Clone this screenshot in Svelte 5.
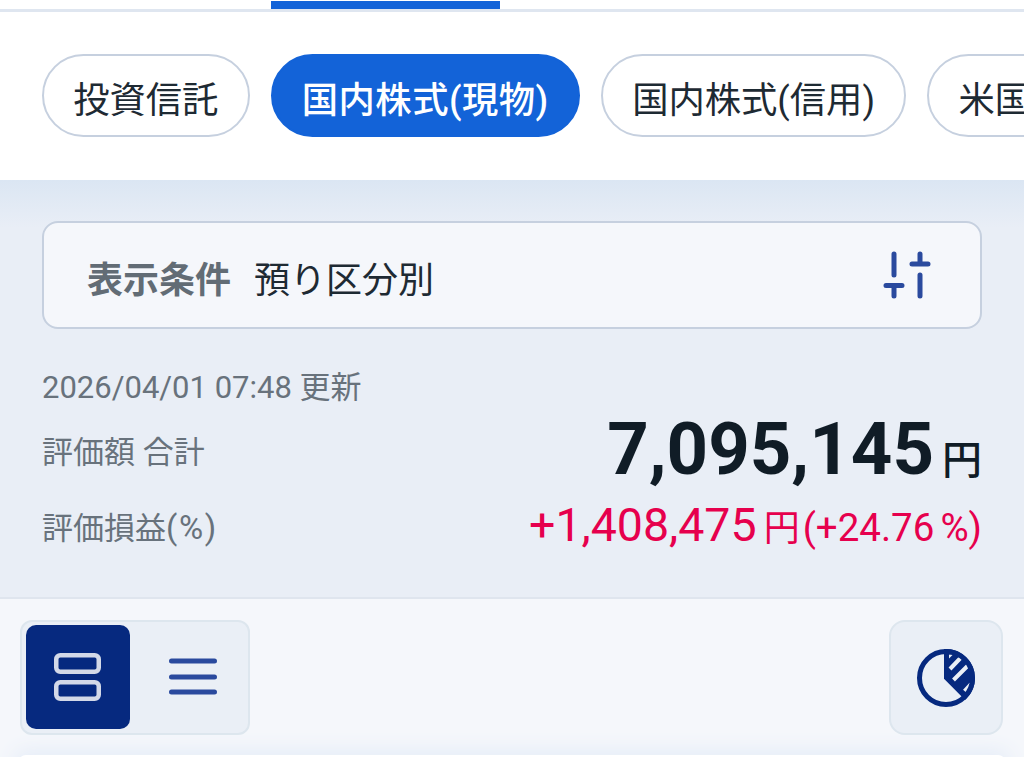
<script>
  const chips = ['投資信託', '国内株式(現物)', '国内株式(信用)', '米国株式']
  const active = '国内株式(現物)'
</script>

<div class="page">
  <div class="tabs">
    <div class="tabs__bar"></div>
  </div>

  <div class="chips">
    {#each chips as chip}
      <div class="chip" class:chip--active={chip === active}>{chip}</div>
    {/each}
  </div>

  <section class="summary">
    <div class="filter">
      <span class="filter__label">表示条件</span>
      <span class="filter__value">預り区分別</span>
      <svg class="filter__icon" width="50" height="50" viewBox="0 0 50 50" fill="none" stroke="#2a4a9e" stroke-width="5" stroke-linecap="round">
        <path d="M12 4V25M4 35.5H20M12 35.5V46M38 4V14M30 14H46M38 25V46" />
      </svg>
    </div>

    <div class="updated">2026/04/01 07:48 更新</div>

    <div class="row row--total">
      <span class="row__label">評価額 合計</span>
      <span class="total">7,095,145<span class="total__yen">円</span></span>
    </div>

    <div class="row row--gain">
      <span class="row__label">評価損益<span class="row__unit">(%)</span></span>
      <span class="gain">+1,408,475<span class="gain__yen">円</span><span class="gain__pct">(+24.76<span class="gain__mark">%</span>)</span></span>
    </div>
  </section>

  <section class="tools">
    <div class="toggle">
      <div class="toggle__btn toggle__btn--on">
        <svg width="48" height="48" viewBox="0 0 48 48" fill="none" stroke="#d3d9e8" stroke-width="4.5">
          <rect x="2.25" y="2.25" width="42.5" height="16.5" rx="4" />
          <rect x="2.25" y="29.25" width="42.5" height="16.5" rx="4" />
        </svg>
      </div>
      <div class="toggle__btn toggle__btn--list">
        <svg width="48" height="38" viewBox="0 0 48 38" fill="none" stroke="#2a4a9e" stroke-width="5" stroke-linecap="round">
          <path d="M2.5 3H45.5M2.5 19H45.5M2.5 34H45.5" />
        </svg>
      </div>
    </div>

    <div class="chart-btn">
      <svg width="60" height="60" viewBox="0 0 60 60" fill="none">
        <path d="M30 3A27 27 0 0 1 49.1 49.1L30 30Z" fill="#06297f" stroke="#06297f" stroke-width="4" />
        <g stroke="#eaeff6" stroke-width="4">
          <path d="M34 21L45 9.5M37.5 32L53 16.5M48.5 43L55 36" />
        </g>
        <path d="M33 6.5H37L33 10.5Z" fill="#eaeff6" />
        <circle cx="30" cy="30" r="26.5" stroke="#06297f" stroke-width="5" />
      </svg>
    </div>
  </section>

  <div class="next-card"></div>
</div>

<style>
  :global(body) {
    margin: 0;
    background: #f5f7fb;
  }

  .page {
    height: 757px;
    overflow: hidden;
    display: flex;
    flex-direction: column;
    font-family: Roboto, 'Noto Sans CJK JP', sans-serif;
    color: #1e2a33;
  }

  .tabs {
    height: 12px;
    box-sizing: border-box;
    padding: 1px 0 0 271px;
    background: #fff;
    border-bottom: 3px solid #dfe6f0;
    flex: none;
  }

  .tabs__bar {
    width: 229px;
    height: 8px;
    background: #1363d8;
  }

  .chips {
    height: 168px;
    box-sizing: border-box;
    flex: none;
    display: flex;
    align-items: flex-start;
    gap: 21px;
    padding: 42px 0 0 42px;
    background: #fff;
    overflow: hidden;
  }

  .chip {
    flex: none;
    height: 83px;
    box-sizing: border-box;
    padding: 2px 29.2px 0;
    display: flex;
    align-items: center;
    border: 2.5px solid #c6d0df;
    border-radius: 42px;
    font-size: 36.3px;
    white-space: nowrap;
  }

  .chip--active {
    background: #1363d8;
    border-color: #1363d8;
    color: #fff;
    font-weight: 500;
    letter-spacing: 0.5px;
  }

  .summary {
    height: 419px;
    box-sizing: border-box;
    flex: none;
    padding: 41px 42px 0;
    background: linear-gradient(#dbe6f3, #e9eef6 48px);
    border-bottom: 2px solid #dfe5ee;
  }

  .filter {
    height: 108px;
    box-sizing: border-box;
    display: flex;
    align-items: center;
    padding: 0 48px 0 43px;
    background: #f5f7fb;
    border: 2.5px solid #c6d0df;
    border-radius: 16px;
    font-size: 36px;
  }

  .filter__label,
  .filter__value {
    padding-top: 3px;
  }

  .filter__label {
    font-weight: 700;
    color: #626c75;
    margin-right: 23px;
  }

  .filter__icon {
    margin-left: auto;
  }

  .updated {
    margin-top: 41px;
    font-size: 31px;
    line-height: 36px;
    color: #68727c;
  }

  .row {
    display: flex;
    justify-content: space-between;
    align-items: center;
  }

  .row--total {
    margin-top: 9px;
    height: 68px;
  }

  .row--gain {
    margin-top: 12px;
    height: 60px;
  }

  .row__label {
    font-size: 31px;
    color: #68727c;
  }

  .row__unit {
    font-size: 33px;
    letter-spacing: 1.6px;
  }

  .total {
    font-size: 72.5px;
    font-weight: 700;
    color: #101c26;
  }

  .total__yen {
    font-size: 40px;
    font-weight: 500;
    margin-left: 8px;
  }

  .gain {
    font-size: 46.5px;
    color: #e6004d;
  }

  .gain__yen {
    font-size: 36px;
    margin-left: 7px;
  }

  .gain__pct {
    font-size: 38.5px;
    margin-left: 3px;
  }

  .gain__mark {
    margin-left: 6px;
  }

  .tools {
    height: 137px;
    box-sizing: border-box;
    flex: none;
    display: flex;
    justify-content: space-between;
    padding: 21px 21px 0 20px;
  }

  .toggle {
    width: 230px;
    height: 115px;
    box-sizing: border-box;
    padding: 3px 3px 3px 4px;
    display: flex;
    background: #eaeff6;
    border: 2px solid #dde6ee;
    border-radius: 12px;
  }

  .toggle__btn {
    width: 104px;
    height: 104px;
    flex: none;
    display: flex;
    align-items: center;
    justify-content: center;
    border-radius: 10px;
  }

  .toggle__btn--list {
    width: 118px;
    box-sizing: border-box;
    padding-left: 8px;
  }

  .toggle__btn--on {
    background: #06297f;
  }

  .chart-btn {
    width: 114px;
    height: 115px;
    box-sizing: border-box;
    display: flex;
    align-items: center;
    justify-content: center;
    background: #eaeff6;
    border: 2px solid #dde6ee;
    border-radius: 16px;
  }

  .next-card {
    height: 10px;
    margin: auto 18px -8px;
    flex: none;
    background: #fff;
    border-radius: 8px 8px 0 0;
    box-shadow: 0 0 20px 4px #e3ebf7;
  }
</style>
